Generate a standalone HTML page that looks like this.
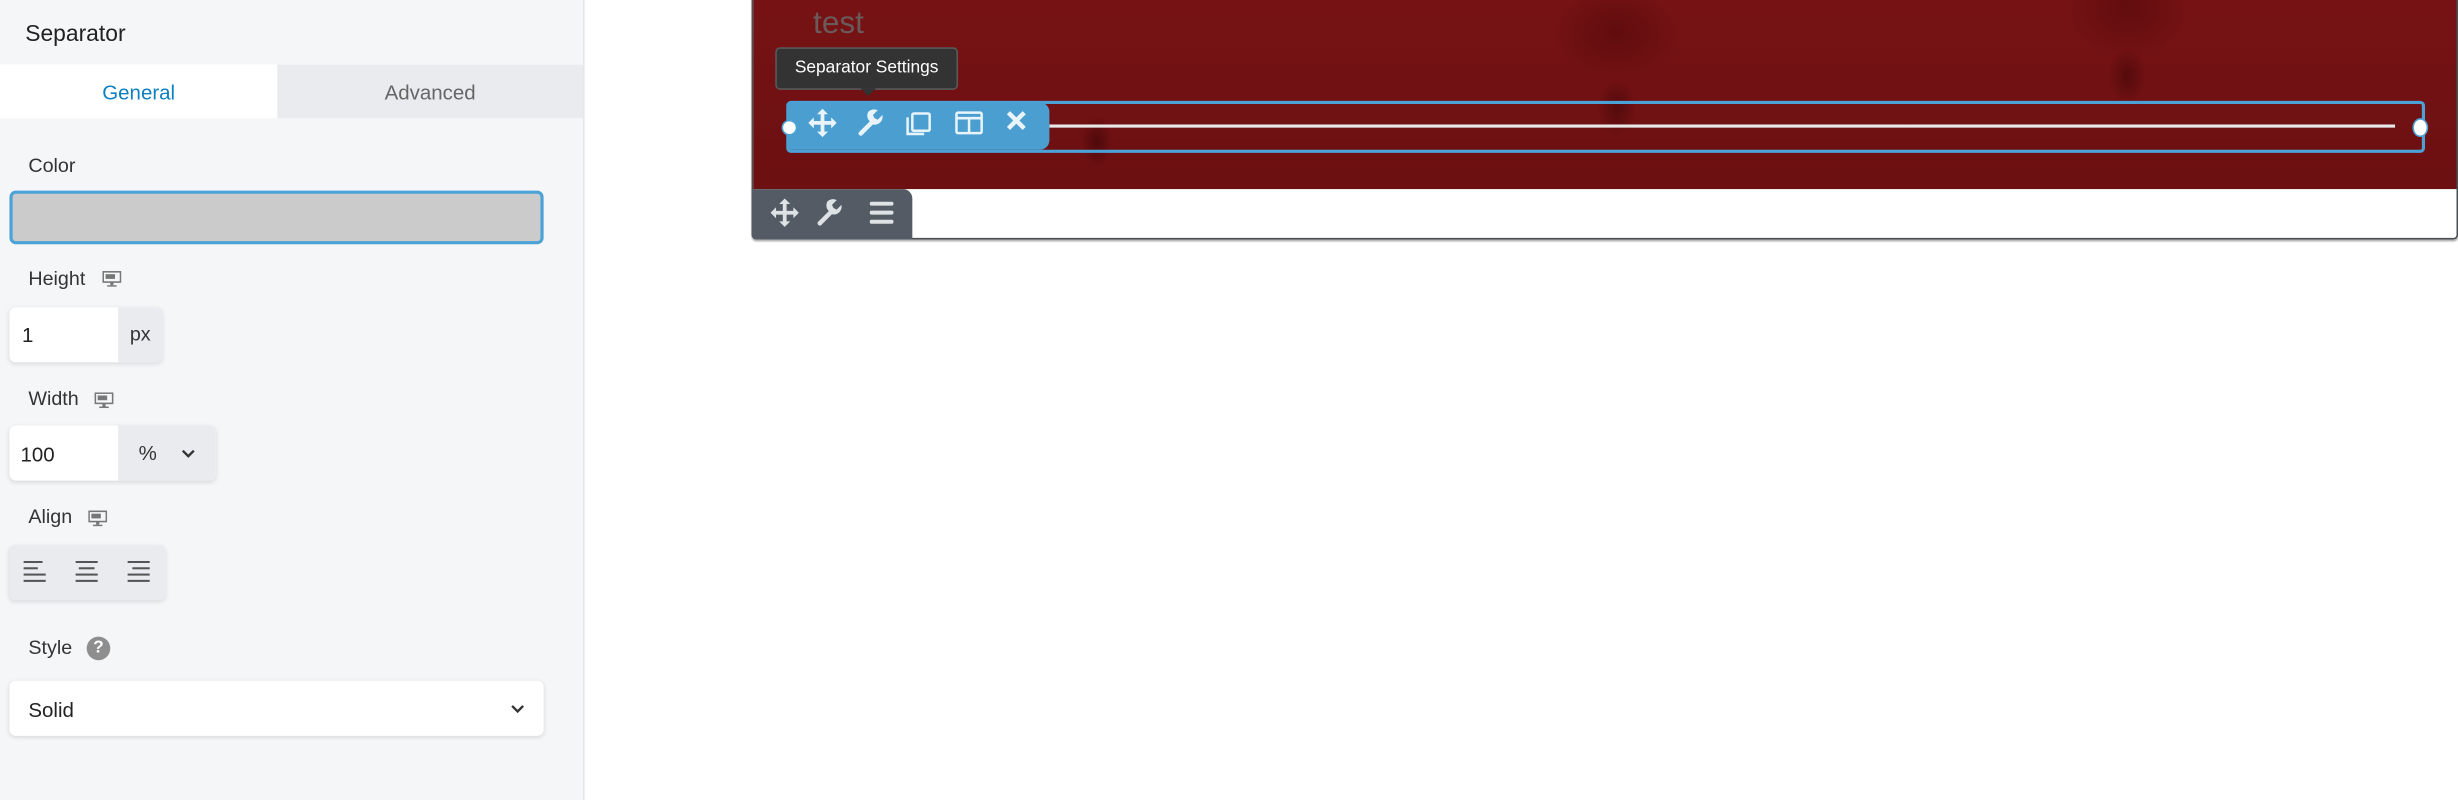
<!DOCTYPE html>
<html><head><meta charset="utf-8"><style>
html,body{margin:0;padding:0;width:2458px;height:800px;overflow:hidden;background:#fff;font-family:"Liberation Sans",sans-serif}
#w{position:absolute;left:0;top:0;width:1560px;height:508px;transform:scale(1.5757);transform-origin:0 0}
.a{position:absolute}
.lbl{position:absolute;left:18px;font-size:12.5px;color:#333}
.mon{position:absolute;width:12px;height:10px}
.sh{box-shadow:0 1px 3px rgba(0,0,0,.12);border-radius:4px}
</style></head><body><div id="w">
<div class="a" style="left:0;top:0;width:370px;height:508px;background:#f5f6f8;border-right:1px solid #e6e7ea"></div>
<div class="a" style="left:16px;top:14px;font-size:14.5px;color:#222">Separator</div>
<div class="a" style="left:0;top:41px;width:176px;height:34px;background:#fff;color:#0e80c0;font-size:13px;text-align:center;line-height:36px">General</div>
<div class="a" style="left:176px;top:41px;width:194px;height:34px;background:#e9ebee;color:#666;font-size:13px;text-align:center;line-height:36px">Advanced</div>
<div class="lbl" style="top:98px">Color</div>
<div class="a" style="left:6px;top:121px;width:335px;height:30px;background:#cbcbcb;border:2px solid #4ba2d6;border-radius:4px"></div>
<div class="lbl" style="top:170px">Height</div>
<svg class="mon" style="left:65px;top:172px" viewBox="0 0 12 10"><rect x="0.5" y="0.5" width="11" height="6.5" fill="none" stroke="#777"/><rect x="2" y="2" width="6" height="3" fill="#777"/><rect x="5" y="7" width="2" height="2" fill="#777"/><rect x="3" y="9" width="6" height="1" fill="#777"/></svg>
<div class="a sh" style="left:6px;top:195px;width:97px;height:35px;background:#fff;overflow:hidden"><div class="a" style="left:69px;top:0;width:28px;height:35px;background:#e9ebee;font-size:12.5px;color:#333;line-height:35px;text-align:center">px</div><div class="a" style="left:8px;top:10px;font-size:13px;color:#222">1</div></div>
<div class="lbl" style="top:246px">Width</div>
<svg class="mon" style="left:60px;top:249px" viewBox="0 0 12 10"><rect x="0.5" y="0.5" width="11" height="6.5" fill="none" stroke="#777"/><rect x="2" y="2" width="6" height="3" fill="#777"/><rect x="5" y="7" width="2" height="2" fill="#777"/><rect x="3" y="9" width="6" height="1" fill="#777"/></svg>
<div class="a sh" style="left:6px;top:270px;width:131px;height:35px;background:#fff;overflow:hidden"><div class="a" style="left:69px;top:0;width:62px;height:35px;background:#e9ebee"><span class="a" style="left:13px;top:10px;font-size:13px;color:#333">%</span><svg class="a" style="left:40px;top:15px" width="9" height="6" viewBox="0 0 9 6"><path d="M1 1l3.5 3.5L8 1" fill="none" stroke="#333" stroke-width="1.5"/></svg></div><div class="a" style="left:7px;top:11px;font-size:13px;color:#222">100</div></div>
<div class="lbl" style="top:321px">Align</div>
<svg class="mon" style="left:56px;top:324px" viewBox="0 0 12 10"><rect x="0.5" y="0.5" width="11" height="6.5" fill="none" stroke="#777"/><rect x="2" y="2" width="6" height="3" fill="#777"/><rect x="5" y="7" width="2" height="2" fill="#777"/><rect x="3" y="9" width="6" height="1" fill="#777"/></svg>
<div class="a sh" style="left:6px;top:346px;width:99px;height:35px;background:#e9ebee"></div>
<svg class="a" style="left:13px;top:356px" width="90" height="14" viewBox="0 0 90 14" fill="#555"><rect x="2" y="0" width="12" height="1.3"/><rect x="2" y="4" width="9" height="1.3"/><rect x="2" y="8" width="14" height="1.3"/><rect x="2" y="12" width="14" height="1.3"/><rect x="35" y="0" width="14" height="1.3"/><rect x="37" y="4" width="10" height="1.3"/><rect x="35" y="8" width="14" height="1.3"/><rect x="35" y="12" width="14" height="1.3"/><rect x="68" y="0" width="14" height="1.3"/><rect x="71" y="4" width="11" height="1.3"/><rect x="68" y="8" width="14" height="1.3"/><rect x="68" y="12" width="14" height="1.3"/></svg>
<div class="lbl" style="top:404px">Style</div>
<div class="a" style="left:55px;top:404px;width:15px;height:15px;border-radius:50%;background:#8e8e8e;color:#fff;font-size:11px;font-weight:bold;text-align:center;line-height:15px">?</div>
<div class="a sh" style="left:6px;top:432px;width:339px;height:35px;background:#fff"><span class="a" style="left:12px;top:11px;font-size:13px;color:#222">Solid</span><svg class="a" style="left:318px;top:15px" width="9" height="6" viewBox="0 0 9 6"><path d="M1 1l3.5 3.5L8 1" fill="none" stroke="#333" stroke-width="1.5"/></svg></div>

<div class="a" style="left:477px;top:-2px;width:1081px;height:152px;border:1px solid #4a4f56;border-radius:0 0 3px 3px;background:#fff;box-shadow:0 1px 1px rgba(0,0,0,.3)"></div>
<div class="a" style="left:478px;top:0;width:1081px;height:120px;background:
radial-gradient(ellipse 10px 16px at 218px 90px,rgba(40,0,0,.45),transparent),
radial-gradient(ellipse 12px 18px at 548px 68px,rgba(40,0,0,.4),transparent),
radial-gradient(ellipse 12px 18px at 872px 48px,rgba(40,0,0,.4),transparent),
radial-gradient(ellipse 40px 30px at 548px 20px,rgba(50,0,0,.3),transparent),
radial-gradient(ellipse 40px 30px at 872px 5px,rgba(50,0,0,.3),transparent),
linear-gradient(180deg,#761214,#6c1012)"></div>
<div class="a" style="left:516px;top:4px;font-size:20px;color:#6a5a5a">test</div>
<div class="a" style="left:477px;top:120px;width:102px;height:32px;background:#545b64;border-radius:0 6px 0 3px"></div>
<svg class="a" style="left:488px;top:125px" width="85" height="20" viewBox="0 0 85 20" fill="#dfe2e5"><path d="M10 1l3.5 3.5h-2.3v4.3h4.3V6.5L19 10l-3.5 3.5v-2.3h-4.3v4.3h2.3L10 19l-3.5-3.5h2.3v-4.3H4.5v2.3L1 10l3.5-3.5v2.3h4.3V4.5H6.5z"/><path d="M37 3a5 5 0 0 1 6-1l-3 3 1 2 2 1 3-3a5 5 0 0 1-6 6l-7 7a1.5 1.5 0 0 1-2-2l7-7a5 5 0 0 1-1-6z"/><rect x="64" y="3" width="15" height="2.5" rx="1"/><rect x="64" y="8.7" width="15" height="2.5" rx="1"/><rect x="64" y="14.5" width="15" height="2.5" rx="1"/></svg>

<div class="a" style="left:499px;top:64px;width:1036px;height:29px;border:2px solid #4ba2d6;border-radius:3px"></div>
<div class="a" style="left:666px;top:79px;width:854px;height:2px;background:#e8e8e8"></div>
<div class="a" style="left:500px;top:65px;width:166px;height:30px;background:#4a9fd0;border-radius:0 6px 6px 0"></div>
<div class="a" style="left:496px;top:76px;width:8px;height:8px;border-radius:50%;background:#fff;border:1.5px solid #4ba2d6"></div>
<div class="a" style="left:1531px;top:75px;width:8px;height:10px;border-radius:50%;background:#fff;border:1.5px solid #4ba2d6"></div>
<svg class="a" style="left:512px;top:68px" width="145" height="20" viewBox="0 0 145 20" fill="#e8f3fa"><path d="M10 1l3.5 3.5h-2.3v4.3h4.3V6.5L19 10l-3.5 3.5v-2.3h-4.3v4.3h2.3L10 19l-3.5-3.5h2.3v-4.3H4.5v2.3L1 10l3.5-3.5v2.3h4.3V4.5H6.5z"/><path d="M39 3a5 5 0 0 1 6-1l-3 3 1 2 2 1 3-3a5 5 0 0 1-6 6l-7 7a1.5 1.5 0 0 1-2-2l7-7a5 5 0 0 1-1-6z"/><g fill="none" stroke="#e8f3fa" stroke-width="1.6"><rect x="67" y="4" width="11" height="11" rx="1"/><path d="M64 6.5v10.5h10.5"/><rect x="95" y="3.5" width="16" height="13" rx="1"/><path d="M103 7v9.5M95 7h16"/></g><path d="M127 4.5l2-2 4 4 4-4 2 2-4 4 4 4-2 2-4-4-4 4-2-2 4-4z"/></svg>
<div class="a" style="left:492px;top:30px;width:114px;height:25px;background:#333;border:1px solid #5a5a5a;border-radius:3px;color:#fff;font-size:11px;text-align:center;line-height:25px">Separator Settings</div>
<div class="a" style="left:546px;top:56px;width:0;height:0;border-left:5px solid transparent;border-right:5px solid transparent;border-top:5px solid #333"></div>
</div></body></html>
